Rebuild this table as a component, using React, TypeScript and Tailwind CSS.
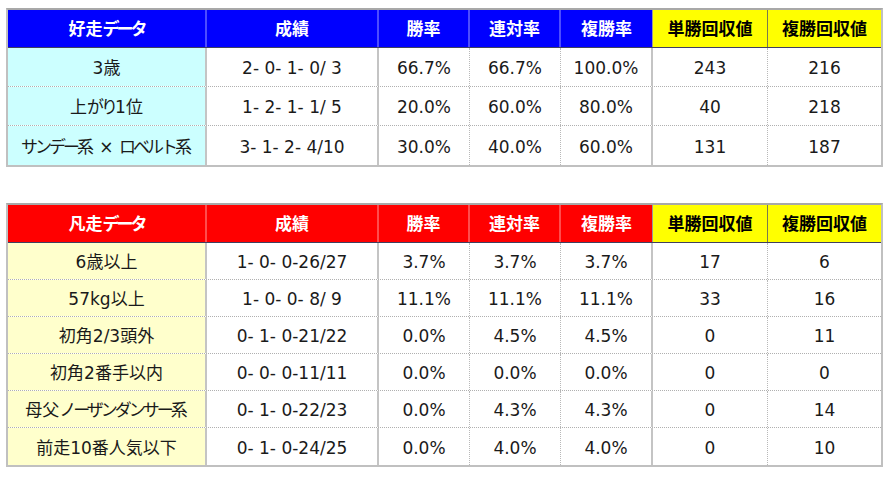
import React from "react";

type Row = string[];

const good: Row[] = [
  ["3歳", "2- 0- 1- 0/ 3", "66.7%", "66.7%", "100.0%", "243", "216"],
  ["上がり1位", "1- 2- 1- 1/ 5", "20.0%", "60.0%", "80.0%", "40", "218"],
  ["サンデー系 × ロベルト系", "3- 1- 2- 4/10", "30.0%", "40.0%", "60.0%", "131", "187"],
];

const bad: Row[] = [
  ["6歳以上", "1- 0- 0-26/27", "3.7%", "3.7%", "3.7%", "17", "6"],
  ["57kg以上", "1- 0- 0- 8/ 9", "11.1%", "11.1%", "11.1%", "33", "16"],
  ["初角2/3頭外", "0- 1- 0-21/22", "0.0%", "4.5%", "4.5%", "0", "11"],
  ["初角2番手以内", "0- 0- 0-11/11", "0.0%", "0.0%", "0.0%", "0", "0"],
  ["母父ノーザンダンサー系", "0- 1- 0-22/23", "0.0%", "4.3%", "4.3%", "0", "14"],
  ["前走10番人気以下", "0- 1- 0-24/25", "0.0%", "4.0%", "4.0%", "0", "10"],
];

const widths = ["w-[199px]", "w-[172px]", "w-[91px]", "w-[91px]", "w-[92px]", "w-[115px]", "w-[113px]"];

const dataRight = [
  "border-r-2 border-r-[#c4c4c4]",
  "border-r-2 border-r-[#c4c4c4]",
  "border-r border-dotted border-r-[#b8b8b8]",
  "border-r border-dotted border-r-[#b8b8b8]",
  "border-r-2 border-r-[#c4c4c4]",
  "border-r border-dotted border-r-[#b8b8b8]",
  "",
];

// Narrow kana runs (proportional kana like the original UI font)
function Txt({ s }: { s: string }) {
  const parts = s.split(/([\u3040-\u30ff]+)/).filter((p) => p.length > 0);
  return (
    <>
      {parts.map((p, i) =>
        /[\u3040-\u30ff]/.test(p) ? (
          <span key={i} className="tracking-[-3px]">
            {p}
          </span>
        ) : (
          <span key={i}>{p}</span>
        )
      )}
    </>
  );
}

function Table({
  title,
  headBg,
  headSep,
  firstBg,
  rows,
  rowH,
}: {
  title: string;
  headBg: string;
  headSep: string;
  firstBg: string;
  rows: Row[];
  rowH: string;
}) {
  const heads = [title, "成績", "勝率", "連対率", "複勝率", "単勝回収値", "複勝回収値"];
  return (
    <div className="ml-[6px] w-[877px] border-2 border-[#c0c0c0] border-t-[#a8a8a8]">
      <div className="flex h-[38px] border-b border-b-[#404060]">
        {heads.map((h, i) => {
          const yellow = i >= 5;
          let sep = "";
          if (i < 4) sep = `border-r-2 ${headSep}`;
          else if (i === 4) sep = "border-r border-r-[#9a9a9a]";
          else if (i === 5) sep = "border-r border-r-[#7a7a50]";
          return (
            <div
              key={i}
              className={`${widths[i]} shrink-0 flex items-center justify-center pt-[2px] font-bold text-[17px] ${
                yellow ? "bg-[#ffff00] text-black" : `${headBg} text-white`
              } ${sep}`}
            >
              <Txt s={h} />
            </div>
          );
        })}
      </div>
      {rows.map((r, ri) => (
        <div
          key={ri}
          className={`flex ${rowH} ${ri < rows.length - 1 ? "border-b border-dotted border-b-[#b0b0b0]" : ""}`}
        >
          {r.map((c, ci) => (
            <div
              key={ci}
              className={`${widths[ci]} shrink-0 flex items-center justify-center pt-[4px] whitespace-pre text-[17px] text-[#1a1a1a] ${
                ci === 0 ? firstBg : "bg-white"
              } ${dataRight[ci]}`}
            >
              <Txt s={c} />
            </div>
          ))}
        </div>
      ))}
    </div>
  );
}

export default function App() {
  return (
    <div
      className="w-[889px] h-[479px] bg-white pt-[8px]"
      style={{ fontFamily: '"DejaVu Sans", "Noto Sans CJK JP", sans-serif' }}
    >
      <Table
        title="好走データ"
        headBg="bg-[#0000ff]"
        headSep="border-r-[#4d4dff]"
        firstBg="bg-[#ccffff]"
        rows={good}
        rowH="h-[39px]"
      />
      <div className="h-[36px]" />
      <Table
        title="凡走データ"
        headBg="bg-[#ff0000]"
        headSep="border-r-[#ff4d4d]"
        firstBg="bg-[#ffffcc]"
        rows={bad}
        rowH="h-[37px]"
      />
    </div>
  );
}
